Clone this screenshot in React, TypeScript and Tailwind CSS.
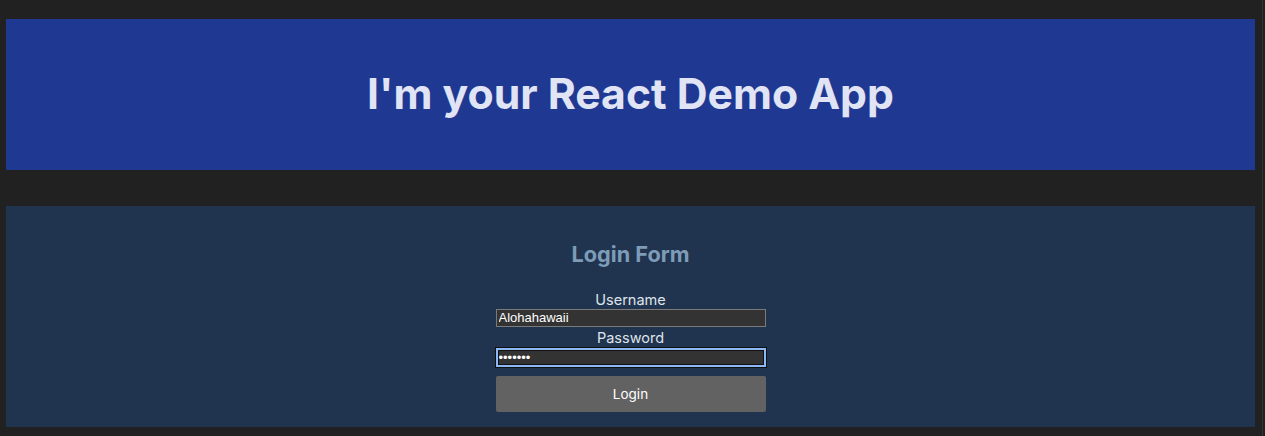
export default function App() {
  return (
    <div className="flex min-h-[436px] bg-[#212121] font-['Inter',sans-serif]">
      <div className="flex-1 pl-[6px] pr-[7px] pt-[19px] pb-[9px]">
        {/* Banner */}
        <header className="flex h-[151px] items-center justify-center bg-[#1f3993]">
          <h1 className="text-[42.7px] font-bold leading-none text-[#e1e4f4]">
            I'm your React Demo App
          </h1>
        </header>

        {/* Login */}
        <section className="mt-[36px] flex h-[221px] flex-col items-center bg-[#21344f] pt-[34px]">
          <h2 className="text-[21.7px] font-bold leading-[28px] text-[#7e9cb7]">
            Login Form
          </h2>
          <form className="mt-[22px] flex w-[270px] flex-col items-stretch">
            <label className="text-center text-[14.5px] leading-[19px] text-[#dfe3ea]">
              Username
            </label>
            <input
              type="text"
              defaultValue="Alohahawaii"
              className="h-[18px] border border-[#7a7a7a] bg-[#333333] px-[2px] font-['Liberation_Sans',sans-serif] text-[13px] text-white outline-none"
            />
            <label className="text-center text-[14.5px] leading-[21px] text-[#dfe3ea]">
              Password
            </label>
            <input
              type="password"
              defaultValue="1234567"
              className="h-[19px] border-2 border-[#8cb8f5] bg-[#333333] px-[1px] font-['Liberation_Sans',sans-serif] text-[13px] text-white shadow-[0_0_0_1px_#111111,inset_0_0_0_1px_#111111] outline-none"
            />
            <button
              type="button"
              className="mt-[9px] h-[36px] rounded-[2px] bg-[#626262] text-[13.5px] text-white"
            >
              Login
            </button>
          </form>
        </section>
      </div>
      {/* scrollbar edge */}
      <div className="w-[3px] border-l border-[#333333]" />
    </div>
  );
}
